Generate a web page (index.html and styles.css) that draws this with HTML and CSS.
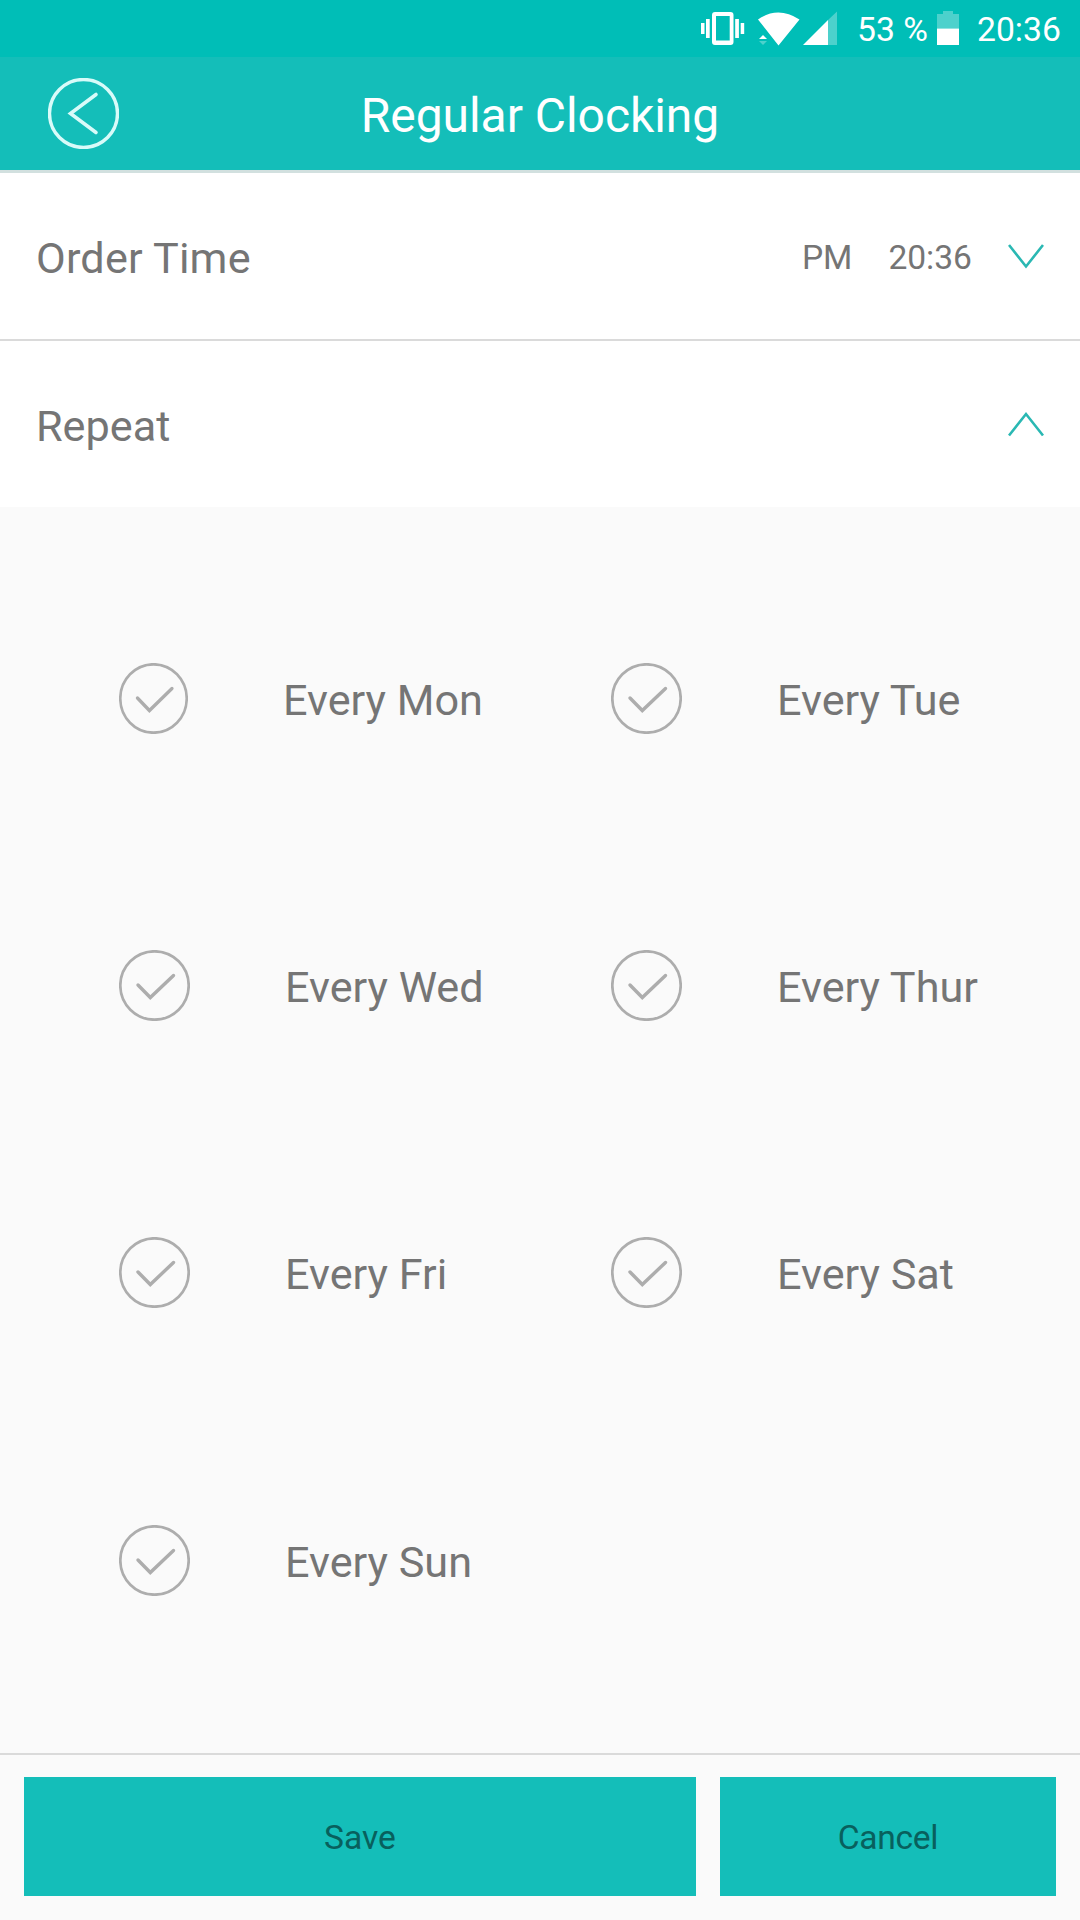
FILE: index.html
```
<!DOCTYPE html>
<html lang="en">
<head>
<meta charset="utf-8">
<title>Regular Clocking</title>
<link rel="stylesheet" href="styles.css">
</head>
<body>
<svg class="defs" width="0" height="0" aria-hidden="true">
  <symbol id="check" viewBox="0 0 71 71" preserveAspectRatio="none">
    <circle cx="35.5" cy="35.5" r="34.2" stroke-width="2.7"/>
    <path d="M19 35L31.3 47.5L54.5 25.5" stroke-width="3.4" stroke-linecap="round"/>
  </symbol>
</svg>
<div class="screen">
  <div class="status">
    <svg class="status-icons" width="140" height="57" viewBox="0 0 140 57">
      <path fill="#fff" fill-rule="evenodd" d="M5 12H20.500Q23.500 12 23.500 15V42Q23.500 45 20.500 45H5Q2 45 2 42V15Q2 12 5 12ZM6 16V40.500H19.700V16Z"/>
      <path fill="#fff" d="M-9 23h3.500v11h-3.500zM-4 19h3.700v19h-3.700zM25.200 19h3.700v19h-3.700zM30.700 23h3.500v11h-3.500z"/>
      <path fill="#fff" d="M48 19.500Q68 5.500 89.500 19.500L68.500 45.500ZM49 39L53 35L57 39Z"/>
      <path fill="#fff" fill-opacity=".3" d="M49 41H57L53 45ZM118 20L127 11.500V45H118Z"/>
      <path fill="#fff" d="M93 45L118 20V45Z"/>
    </svg>
    <span class="battery-text">53 %</span>
    <svg class="battery" width="22" height="35" viewBox="0 0 22 35">
      <path fill="#fff" fill-opacity=".3" d="M0 3H6V0H16V3H22V17.500H0Z"/>
      <path fill="#fff" d="M0 17.500H22V34H0Z"/>
    </svg>
    <span class="clock">20:36</span>
  </div>
  <header class="header">
    <svg class="back" width="71" height="71" viewBox="0 0 71 71">
      <circle cx="35.500" cy="35.500" r="34" stroke-width="3.400"/>
      <path d="M48 16.500L22.500 35.500L48 54.500" stroke-width="3.600" stroke-linecap="round"/>
    </svg>
    <h1 class="title">Regular Clocking</h1>
  </header>
  <div class="row">
    <span class="row-label spaced">Order Time</span>
    <span class="value">PM</span>
    <span class="value time">20:36</span>
    <svg class="chevron" width="36" height="26" viewBox="0 0 36 26"><path d="M1 2L18 23.500L35 2"/></svg>
  </div>
  <div class="row last">
    <span class="row-label">Repeat</span>
    <svg class="chevron" width="36" height="26" viewBox="0 0 36 26"><path d="M1 24.500L18 3L35 24.500"/></svg>
  </div>
  <main class="days">
    <div class="day first"><svg class="tick"><use href="#check"/></svg><span>Every Mon</span></div>
    <div class="day"><svg class="tick"><use href="#check"/></svg><span>Every Tue</span></div>
    <div class="day"><svg class="tick"><use href="#check"/></svg><span>Every Wed</span></div>
    <div class="day"><svg class="tick"><use href="#check"/></svg><span>Every Thur</span></div>
    <div class="day"><svg class="tick"><use href="#check"/></svg><span>Every Fri</span></div>
    <div class="day"><svg class="tick"><use href="#check"/></svg><span>Every Sat</span></div>
    <div class="day"><svg class="tick"><use href="#check"/></svg><span>Every Sun</span></div>
  </main>
  <footer class="actions">
    <button class="btn">Save</button>
    <button class="btn cancel">Cancel</button>
  </footer>
</div>
</body>
</html>
```
FILE: styles.css
```
* { box-sizing: border-box; }
body { margin: 0; font-family: Roboto, sans-serif; color: #757575; background: #fafafa; }
.defs { position: absolute; }
svg { display: block; flex: none; }
.screen { width: 1080px; height: 1920px; display: flex; flex-direction: column; overflow: hidden; }

.status {
  height: 57px; flex: none; display: flex; align-items: center; justify-content: flex-end;
  padding-right: 19px; background: #00beb7; color: #fff; font-size: 33.7px;
}
.status-icons { overflow: visible; margin-right: 7px; }
.battery-text { width: 80px; padding-top: 2px; }
.battery { margin-right: 18px; }
.clock { padding-top: 2px; width: 84px; white-space: nowrap; }

.header {
  height: 116px; flex: none; display: grid; grid-template-columns: 120px 1fr 120px; align-items: center;
  background: #14beb9; border-bottom: 3px solid #d2e0df; color: #fff;
}
.back { margin-left: 48px; fill: none; stroke: #d8fbf9; }
.title { margin: 0; padding-top: 4px; text-align: center; font-size: 48px; font-weight: 400; letter-spacing: -0.05px; }

.row {
  height: 168px; flex: none; display: flex; align-items: center;
  padding: 0 36px; background: #fff; border-bottom: 2px solid #dadada;
}
.row.last { height: 166px; border-bottom: 0; }
.row-label { flex: 1; padding-top: 4px; font-size: 43.2px; }
.spaced { letter-spacing: 0.2px; }
.value { padding-top: 3px; font-size: 33.6px; }
.time { margin-left: 36px; }
.chevron { margin-left: 36px; fill: none; stroke: #2ab8b3; stroke-width: 2.6; }

.days {
  flex: 1; display: grid; grid-template-columns: 492px 1fr; grid-template-rows: 287px 287px 287px 289px;
  align-content: start; padding: 48px 0 0 119px;
}
.day { display: flex; align-items: center; font-size: 43.2px; }
.day span { padding-top: 4px; }
.tick { width: 71px; height: 71px; margin-right: 95px; fill: none; stroke: #adadad; }
.first .tick { width: 69px; }

.actions {
  height: 167px; flex: none; display: grid; grid-template-columns: 672px 336px; gap: 24px;
  padding: 22px 24px 24px; border-top: 2px solid #dadada;
}
.btn {
  height: 119px; padding: 2px 0 0; border: 0; background: #14beb9; color: #08605d;
  font: 33.6px Roboto, sans-serif;
}
.cancel { letter-spacing: -0.3px; }
```
